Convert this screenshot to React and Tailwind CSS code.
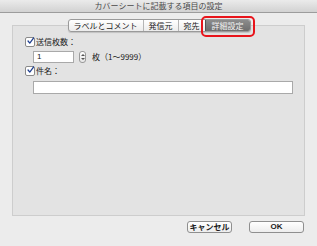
import React from 'react';

const Check = () => (
    <span className="w-[10px] h-[10px] bg-white border border-[#8a8a8a] rounded-[2px] flex items-center justify-center shrink-0">
        <svg width="10" height="10" viewBox="0 0 10 10" className="-mt-[2px] ml-[1px]">
            <path d="M1.5 5 L4 8 L9.5 0.5" fill="none" stroke="#1f3f8f" strokeWidth="1.8" strokeLinecap="round" strokeLinejoin="round" />
        </svg>
    </span>
);

const tabs = ['ラベルとコメント', '発信元', '宛先'];

const App = () => {
    return (
        <div className="w-[317px] h-[246px] bg-[#ececec] flex flex-col text-[8px] text-[#1a1a1a] overflow-hidden" style={{ fontFamily: '"Noto Sans CJK JP", "Noto Sans", sans-serif' }}>
            <div className="h-[13px] shrink-0 bg-gradient-to-b from-[#ebebeb] to-[#d2d2d2] border-b border-[#9c9c9c] flex items-center justify-center text-[#4a4a4a] leading-none">
                カバーシートに記載する項目の設定
            </div>

            <div className="relative z-10 mt-[6px] flex justify-center">
                <div className="relative flex h-[13px] ml-[1px] rounded-[3px] border border-[#9a9a9a] bg-gradient-to-b from-white to-[#ececec] shadow-[0_1px_1px_rgba(0,0,0,0.15)]">
                    {tabs.map((t, i) => (
                        <div key={t} className={`flex items-center px-[5px] leading-none ${i > 0 ? 'border-l border-[#b5b5b5]' : ''}`}>{t}</div>
                    ))}
                    <div className="flex items-center px-[6px] leading-none text-[#f4f4f4] bg-gradient-to-b from-[#8c8c8c] to-[#6e6e6e] border-l border-[#555] rounded-r-[2px]">詳細設定</div>
                    <div className="absolute -right-[5px] -top-[4px] w-[54px] h-[21px] border-2 border-[#e8141b] rounded-[5px]" />
                </div>
            </div>

            <div className="mx-[12px] -mt-[7px] h-[191px] border border-[#cdcdcd] bg-[#e3e3e3] pt-[11px] pl-[12px] pr-[11px]">
                <div className="flex items-center gap-[1px] h-[10px] leading-none">
                    <Check />
                    <span>送信枚数：</span>
                </div>
                <div className="flex items-center mt-[4px] ml-[8px] h-[12px] leading-none">
                    <div className="w-[41px] h-[12px] bg-white border border-[#a9a9a9] flex items-center pl-[3px]" style={{ fontFamily: '"Liberation Sans", sans-serif' }}>1</div>
                    <div className="ml-[5px] w-[7px] h-[12px] rounded-[3px] border border-[#9a9a9a] bg-gradient-to-b from-white to-[#e6e6e6] flex flex-col items-center justify-center gap-[2px]">
                        <span className="w-0 h-0 border-l-[2px] border-r-[2px] border-b-[2px] border-l-transparent border-r-transparent border-b-[#555]" />
                        <span className="w-0 h-0 border-l-[2px] border-r-[2px] border-t-[2px] border-l-transparent border-r-transparent border-t-[#555]" />
                    </div>
                    <span className="ml-[6px]">枚（1〜9999）</span>
                </div>
                <div className="flex items-center gap-[1px] mt-[3px] h-[10px] leading-none">
                    <Check />
                    <span>件名：</span>
                </div>
                <div className="mt-[5px] ml-[8px] h-[13px] bg-white border border-[#a9a9a9]" />
            </div>

            <div className="flex justify-end gap-[17px] mt-[5px] pr-[13px]">
                <button className="w-[45px] h-[12px] rounded-[3px] border border-[#8f8f8f] bg-gradient-to-b from-white to-[#ededed] flex items-center justify-center leading-none text-[8px] font-bold">キャンセル</button>
                <button className="w-[55px] h-[12px] rounded-[3px] border border-[#8f8f8f] bg-gradient-to-b from-white to-[#ededed] flex items-center justify-center leading-none text-[8px] font-bold" style={{ fontFamily: '"Liberation Sans", sans-serif' }}>OK</button>
            </div>
        </div>
    );
};

export default App;
